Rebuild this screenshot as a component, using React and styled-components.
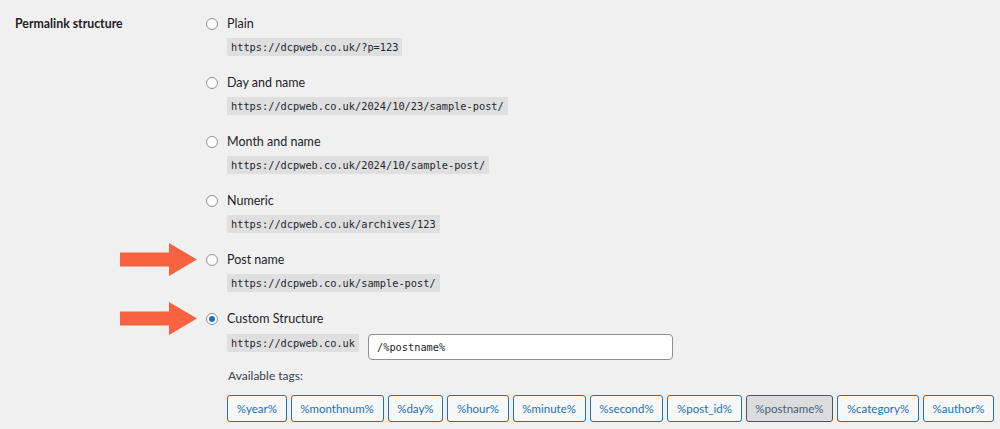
import React from "react";
import styled, { createGlobalStyle } from "styled-components";

const Global = createGlobalStyle`
  html, body { margin: 0; padding: 0; background: #f0f0f1; }
  body { font-family: Lato, "Noto Sans", sans-serif; color: #1d2327; }
`;

const Page = styled.div`
  position: relative;
  width: 1000px;
  height: 429px;
  overflow: hidden;
  display: flex;
  padding-top: 15px;
  box-sizing: border-box;
`;

const RowLabel = styled.div`
  width: 191px;
  padding-left: 15px;
  font-size: 12.3px;
  font-weight: 700;
  line-height: 18px;
  flex-shrink: 0;
`;

const Options = styled.div`
  display: flex;
  flex-direction: column;
`;

const Option = styled.div`
  display: flex;
  flex-direction: column;
  margin-bottom: ${(p) => (p.$last ? 0 : 18)}px;
`;

const Choice = styled.label`
  display: flex;
  align-items: center;
  height: 18px;
  font-size: 12.5px;
  line-height: 18px;
  color: #1d2327;
`;

const Radio = styled.span`
  width: 12px;
  height: 12px;
  box-sizing: border-box;
  border: 1px solid #8c8f94;
  border-radius: 50%;
  background: #fff;
  margin-right: 9px;
  display: flex;
  align-items: center;
  justify-content: center;
  &::after {
    content: "";
    display: ${(p) => (p.$checked ? "block" : "none")};
    width: 6px;
    height: 6px;
    border-radius: 50%;
    background: #2271b1;
  }
`;

const Code = styled.code`
  display: inline-block;
  align-self: flex-start;
  margin-left: ${(p) => (p.$inline ? 0 : 21)}px;
  margin-top: ${(p) => (p.$inline ? 0 : 5)}px;
  height: 18px;
  line-height: 18px;
  padding: 0 4px;
  background: #dfdfe0;
  font-family: "DejaVu Sans Mono", "Liberation Mono", monospace;
  font-size: 10.3px;
  color: #23282d;
`;

const CustomRow = styled.div`
  display: flex;
  align-items: center;
  margin-left: 21px;
  margin-top: 6px;
  gap: 9px;
`;

const Input = styled.div`
  width: 305px;
  height: 26px;
  box-sizing: border-box;
  border: 1px solid #8c8f94;
  border-radius: 4px;
  background: #fff;
  padding: 0 8px;
  display: flex;
  align-items: center;
  font-family: "DejaVu Sans Mono", "Liberation Mono", monospace;
  font-size: 10.3px;
  color: #23282d;
`;

const TagsTitle = styled.div`
  margin-left: 22px;
  margin-top: 7px;
  font-size: 12px;
  line-height: 17px;
  color: #3c434a;
`;

const Tags = styled.div`
  display: flex;
  gap: 4px;
  margin-left: 21px;
  margin-top: 11px;
`;

const Tag = styled.button`
  height: 27px;
  box-sizing: border-box;
  padding: 0 8.7px;
  border-radius: 3px;
  border: 1px solid ${(p) => (p.$active ? "#50575e" : "#2271b1")};
  background: ${(p) => (p.$active ? "#dcdcde" : "#f6f7f7")};
  color: ${(p) => (p.$active ? "#3f5f7d" : "#2271b1")};
  font-family: Lato, "Noto Sans", sans-serif;
  font-size: 11.5px;
  cursor: pointer;
  white-space: nowrap;
`;

const Arrow = styled.svg`
  position: absolute;
  left: 120px;
  top: ${(p) => p.$top}px;
`;

const ArrowMark = ({ top }) => (
  <Arrow $top={top} width="78" height="33" viewBox="0 0 78 33">
    <polygon
      points="0,9.5 49,9.5 49,0 77,16.5 49,33 49,23.5 0,23.5"
      fill="#f8623f"
    />
  </Arrow>
);

const items = [
  ["Plain", "https://dcpweb.co.uk/?p=123"],
  ["Day and name", "https://dcpweb.co.uk/2024/10/23/sample-post/"],
  ["Month and name", "https://dcpweb.co.uk/2024/10/sample-post/"],
  ["Numeric", "https://dcpweb.co.uk/archives/123"],
  ["Post name", "https://dcpweb.co.uk/sample-post/"],
];

const tags = [
  "%year%",
  "%monthnum%",
  "%day%",
  "%hour%",
  "%minute%",
  "%second%",
  "%post_id%",
  "%postname%",
  "%category%",
  "%author%",
];

export default function App() {
  return (
    <>
      <Global />
      <Page>
        <RowLabel>Permalink structure</RowLabel>
        <Options>
          {items.map(([label, url]) => (
            <Option key={label}>
              <Choice>
                <Radio />
                {label}
              </Choice>
              <Code>{url}</Code>
            </Option>
          ))}
          <Option $last>
            <Choice>
              <Radio $checked />
              Custom Structure
            </Choice>
            <CustomRow>
              <Code $inline>https://dcpweb.co.uk</Code>
              <Input>/%postname%</Input>
            </CustomRow>
            <TagsTitle>Available tags:</TagsTitle>
            <Tags>
              {tags.map((t) => (
                <Tag key={t} $active={t === "%postname%"}>
                  {t}
                </Tag>
              ))}
            </Tags>
          </Option>
        </Options>
        <ArrowMark top={243} />
        <ArrowMark top={302} />
      </Page>
    </>
  );
}
